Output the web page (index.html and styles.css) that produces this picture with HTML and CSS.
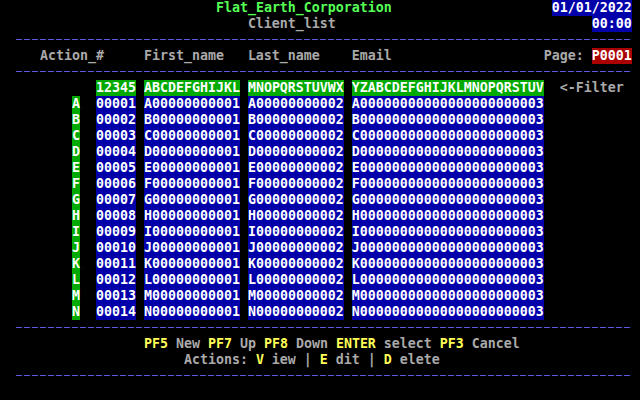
FILE: index.html
```html
<!DOCTYPE html>
<html>
<head>
<meta charset="utf-8">
<link rel="stylesheet" href="styles.css">
</head>
<body>
<div class="screen">
<div class="row">                           <span class="title">Flat_Earth_Corporation</span>                    <span class="hl blue">01/01/2022</span></div>
<div class="row">                               Client_list                                <span class="hl blue">00:00</span></div>
<div class="rule"></div>
<div class="row">     Action_#     First_name   Last_name    Email                   Page: <span class="hl red">P0001</span></div>
<div class="rule"></div>
<div class="row">            <span class="hl green">12345</span> <span class="hl green">ABCDEFGHIJKL</span> <span class="hl green">MNOPQRSTUVWX</span> <span class="hl green">YZABCDEFGHIJKLMNOPQRSTUV</span>  &lt;-Filter</div>
<div class="row">         <span class="hl green">A</span>  <span class="hl blue">00001</span> <span class="hl blue">A00000000001</span> <span class="hl blue">A00000000002</span> <span class="hl blue">A00000000000000000000003</span></div>
<div class="row">         <span class="hl green">B</span>  <span class="hl blue">00002</span> <span class="hl blue">B00000000001</span> <span class="hl blue">B00000000002</span> <span class="hl blue">B00000000000000000000003</span></div>
<div class="row">         <span class="hl green">C</span>  <span class="hl blue">00003</span> <span class="hl blue">C00000000001</span> <span class="hl blue">C00000000002</span> <span class="hl blue">C00000000000000000000003</span></div>
<div class="row">         <span class="hl green">D</span>  <span class="hl blue">00004</span> <span class="hl blue">D00000000001</span> <span class="hl blue">D00000000002</span> <span class="hl blue">D00000000000000000000003</span></div>
<div class="row">         <span class="hl green">E</span>  <span class="hl blue">00005</span> <span class="hl blue">E00000000001</span> <span class="hl blue">E00000000002</span> <span class="hl blue">E00000000000000000000003</span></div>
<div class="row">         <span class="hl green">F</span>  <span class="hl blue">00006</span> <span class="hl blue">F00000000001</span> <span class="hl blue">F00000000002</span> <span class="hl blue">F00000000000000000000003</span></div>
<div class="row">         <span class="hl green">G</span>  <span class="hl blue">00007</span> <span class="hl blue">G00000000001</span> <span class="hl blue">G00000000002</span> <span class="hl blue">G00000000000000000000003</span></div>
<div class="row">         <span class="hl green">H</span>  <span class="hl blue">00008</span> <span class="hl blue">H00000000001</span> <span class="hl blue">H00000000002</span> <span class="hl blue">H00000000000000000000003</span></div>
<div class="row">         <span class="hl green">I</span>  <span class="hl blue">00009</span> <span class="hl blue">I00000000001</span> <span class="hl blue">I00000000002</span> <span class="hl blue">I00000000000000000000003</span></div>
<div class="row">         <span class="hl green">J</span>  <span class="hl blue">00010</span> <span class="hl blue">J00000000001</span> <span class="hl blue">J00000000002</span> <span class="hl blue">J00000000000000000000003</span></div>
<div class="row">         <span class="hl green">K</span>  <span class="hl blue">00011</span> <span class="hl blue">K00000000001</span> <span class="hl blue">K00000000002</span> <span class="hl blue">K00000000000000000000003</span></div>
<div class="row">         <span class="hl green">L</span>  <span class="hl blue">00012</span> <span class="hl blue">L00000000001</span> <span class="hl blue">L00000000002</span> <span class="hl blue">L00000000000000000000003</span></div>
<div class="row">         <span class="hl green">M</span>  <span class="hl blue">00013</span> <span class="hl blue">M00000000001</span> <span class="hl blue">M00000000002</span> <span class="hl blue">M00000000000000000000003</span></div>
<div class="row">         <span class="hl green">N</span>  <span class="hl blue">00014</span> <span class="hl blue">N00000000001</span> <span class="hl blue">N00000000002</span> <span class="hl blue">N00000000000000000000003</span></div>
<div class="rule"></div>
<div class="row">                  <span class="key">PF5</span> New <span class="key">PF7</span> Up <span class="key">PF8</span> Down <span class="key">ENTER</span> select <span class="key">PF3</span> Cancel</div>
<div class="row">                       Actions: <span class="key">V</span> iew | <span class="key">E</span> dit | <span class="key">D</span> elete</div>
<div class="rule"></div>
<div class="row"> </div>
</div>
</body>
</html>
```
FILE: styles.css
```css
html, body {
  margin: 0;
  padding: 0;
  background: #000;
}
.screen {
  width: 640px;
  height: 400px;
  overflow: hidden;
  background: #000;
  color: #aaaaaa;
  font-family: "DejaVu Sans Mono", "Liberation Mono", monospace;
  font-size: 13.29px;
  font-weight: bold;
}
.row {
  height: 16px;
  line-height: 16px;
  white-space: pre;
}
.hl {
  display: inline-block;
  height: 16px;
  line-height: 16px;
  vertical-align: top;
  color: #ffffff;
}
.blue { background: #0000aa; }
.green { background: #00aa00; }
.red { background: #aa0000; }
.title { color: #55ff55; }
.key { color: #ffff55; }
.rule {
  height: 16px;
  position: relative;
}
.rule::before {
  content: "";
  position: absolute;
  left: 16px;
  top: 7px;
  width: 616px;
  height: 1px;
  background: repeating-linear-gradient(90deg, #5a5ae0 0 6px, transparent 6px 8px);
}
```
